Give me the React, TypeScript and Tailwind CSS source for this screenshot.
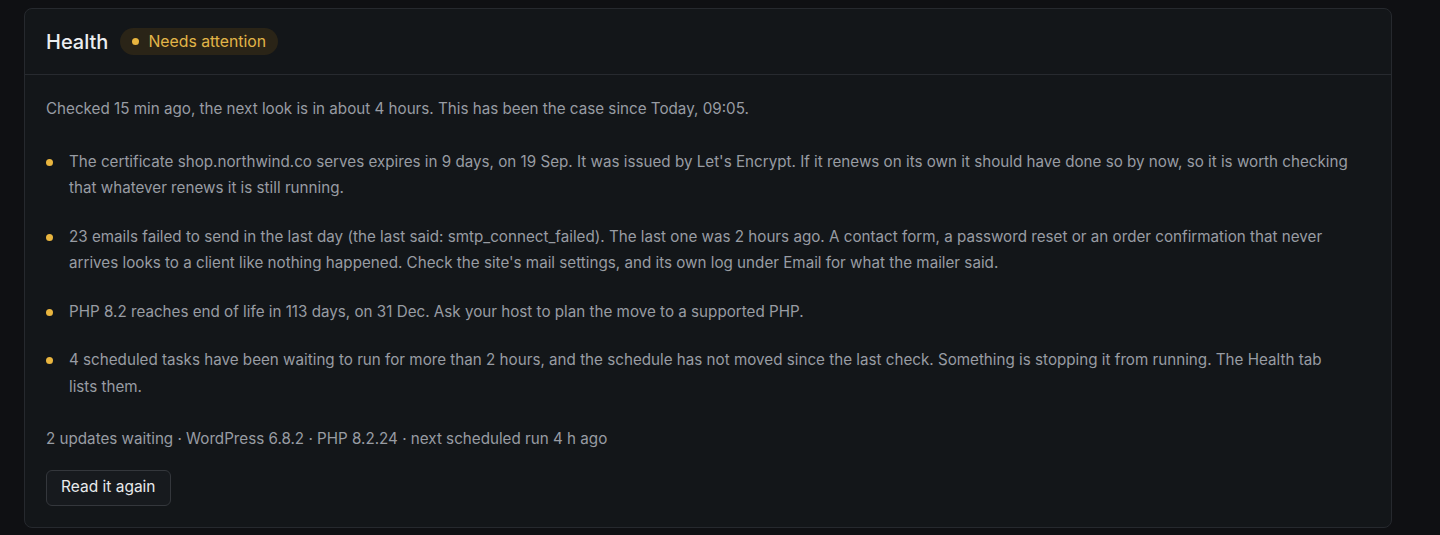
export default function App() {
  const issues = [
    "The certificate shop.northwind.co serves expires in 9 days, on 19 Sep. It was issued by Let's Encrypt. If it renews on its own it should have done so by now, so it is worth checking that whatever renews it is still running.",
    "23 emails failed to send in the last day (the last said: smtp_connect_failed). The last one was 2 hours ago. A contact form, a password reset or an order confirmation that never arrives looks to a client like nothing happened. Check the site's mail settings, and its own log under Email for what the mailer said.",
    "PHP 8.2 reaches end of life in 113 days, on 31 Dec. Ask your host to plan the move to a supported PHP.",
    "4 scheduled tasks have been waiting to run for more than 2 hours, and the schedule has not moved since the last check. Something is stopping it from running. The Health tab lists them.",
  ];

  return (
    <div
      className="min-h-[535px] bg-[#0f1013] pt-2 pl-6"
      style={{ fontFamily: "Inter, 'Noto Sans', sans-serif" }}
    >
      <section className="w-[1368px] rounded-lg border border-[#26292e] bg-[#131619]">
        {/* Header */}
        <header className="flex h-[66px] items-center gap-3 border-b border-[#272a2f] px-[21px]">
          <h2 className="text-[20px] font-medium text-[#eceef0]">Health</h2>
          <span className="flex h-[27px] items-center gap-[9px] rounded-full bg-[#2a2417] px-[12px] text-[15.8px] text-[#e2b548]">
            <span className="h-[7px] w-[7px] rounded-full bg-[#e9b53f]" />
            Needs attention
          </span>
        </header>

        {/* Body */}
        <div className="px-[21px] pt-[21px] pb-[21px] text-[15.2px] leading-[26.5px] text-[#989ca3]">
          <p>Checked 15 min ago, the next look is in about 4 hours. This has been the case since Today, 09:05.</p>

          <ul className="mt-[26px] flex flex-col gap-[22px]">
            {issues.map((text) => (
              <li key={text} className="flex gap-4 pr-[18px]">
                <span className="mt-[10px] h-[7px] w-[7px] flex-shrink-0 rounded-full bg-[#e9b53f]" />
                <span>{text}</span>
              </li>
            ))}
          </ul>

          <p className="mt-[26px]">2 updates waiting · WordPress 6.8.2 · PHP 8.2.24 · next scheduled run 4 h ago</p>

          <button className="mt-[17px] h-[36px] rounded-md border border-[#34373c] bg-[#171a1e] px-[14px] text-[15.5px] text-[#e8eaec]">
            Read it again
          </button>
        </div>
      </section>
    </div>
  );
}
